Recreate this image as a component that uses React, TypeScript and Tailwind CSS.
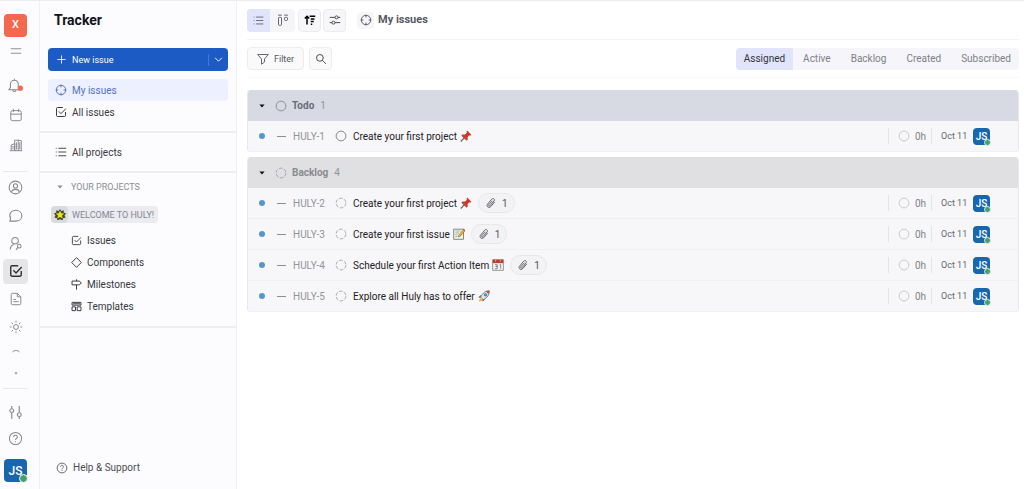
import React from "react";

type IconProps = { className?: string; children?: React.ReactNode; width?: number };

const Icon = ({ className = "size-3", children, width = 1.2 }: IconProps) => (
    <svg viewBox="0 0 16 16" className={`shrink-0 ${className}`} fill="none" stroke="currentColor" strokeWidth={width} aria-hidden="true">
        {children}
    </svg>
);

const BellIcon = () => (
    <Icon className="size-[15px]" width={1.1}>
        <path d="M1 12.5h11.500L11 10V6.500a4.200 4.200 0 0 0-8.400 0V10zM5 12.500c0 2.600 3.600 2.600 3.600 0M6.800 2.300V.8" />
        <circle cx="13.2" cy="10.8" r="2.800" fill="#ee6a50" stroke="none" />
    </Icon>
);

const CalendarIcon = () => (
    <Icon className="size-[14px]" width={1.1}>
        <rect x="2" y="3" width="12" height="11.5" rx="2" />
        <path d="M2 7h12M5 1v3.5M11 1v3.5" />
    </Icon>
);

const BuildingIcon = () => (
    <Icon className="size-[14px]" width={1.1}>
        <path d="M1 14.500h14M2.500 14.500V8l4-1.500v8M6.500 14.500V2.500h4v12M10.500 2.500l3.500.5v11.500M4.500 9v4M8.500 5v8M12.300 5v8" />
    </Icon>
);

const UserIcon = () => (
    <Icon className="size-[15px]" width={1.1}>
        <circle cx="8" cy="8" r="6.800" />
        <circle cx="8" cy="6.300" r="2.200" />
        <path d="M3.800 13c.4-2.200 1.800-3 4.200-3s3.800.8 4.200 3" />
    </Icon>
);

const ChatIcon = () => (
    <Icon className="size-[15px]" width={1.1}>
        <path d="M2 14l.8-3.200C.2 6.500 3.500 2.500 8 2.500c4 0 6.800 2.400 6.800 5.700S12 14 8 14z" />
    </Icon>
);

const ContactIcon = () => (
    <Icon className="size-[15px]" width={1.1}>
        <circle cx="7.500" cy="5" r="3.500" />
        <path d="M2.500 14.500c0-3 1.200-4.800 3.500-5.200" />
        <circle cx="12" cy="10.800" r="1.900" />
        <path d="M10.600 12.200L8.500 14.800" />
    </Icon>
);

const CheckIcon = ({ className = "size-3", width = 1.3 }: IconProps) => (
    <Icon className={className} width={width}>
        <path d="M10.500 2H3.500A1.500 1.500 0 0 0 2 3.500v9A1.500 1.500 0 0 0 3.500 14h9a1.500 1.500 0 0 0 1.500-1.500V8M5 7.200l3 3L14.500 3.500" />
    </Icon>
);

const DocIcon = () => (
    <Icon className="size-[14px]" width={1.1}>
        <path d="M9.500 1.500H4A1.500 1.500 0 0 0 2.500 3v10A1.500 1.500 0 0 0 4 14.500h8a1.500 1.500 0 0 0 1.500-1.500V5.500zM9.500 1.500v4h4M5 8.500h3M5 11h6" />
    </Icon>
);

const SunIcon = () => (
    <Icon className="size-[14px]" width={1.1}>
        <circle cx="8" cy="8" r="2.800" />
        <path d="M8 1v2M8 13v2M1 8h2M13 8h2M3 3l1.500 1.500M11.500 11.500L13 13M13 3l-1.500 1.500M4.500 11.500L3 13" />
    </Icon>
);

const SettingsIcon = () => (
    <Icon className="size-[15px]" width={1.2}>
        <path d="M4 1v3M4 8v7M12 1v7M12 12.500V15" />
        <circle cx="4" cy="6" r="2" />
        <circle cx="12" cy="10.300" r="2" />
    </Icon>
);

const HelpIcon = ({ className = "size-[15px]" }: IconProps) => (
    <Icon className={className} width={1.1}>
        <circle cx="8" cy="8" r="6.500" />
        <path d="M6 6.500c0-2.700 4-2.700 4 0 0 1.400-2 1.500-2 3.200M8 10.800v1.200" />
    </Icon>
);

const TargetIcon = ({ className = "size-3" }: IconProps) => (
    <Icon className={className} width={1.3}>
        <circle cx="8" cy="8" r="6.300" />
        <path d="M8 1v3.500M8 11.500V15M1 8h3.500M11.500 8H15" />
    </Icon>
);

const ListIcon = ({ className = "size-3" }: IconProps) => (
    <Icon className={className}>
        <path d="M4.500 3H15M4.500 8H15M4.500 13H15M1 3h1.200M1 8h1.200M1 13h1.200" />
    </Icon>
);

const ClipIcon = () => (
    <Icon className="size-3" width={1.2}>
        <path d="M13 6.500L7.800 12.700c-2.600 3-6.800-.3-4.300-3.300L9 2.800c1.800-2 4.800.3 3 2.500l-5.300 6.300c-1 1.200-2.600-.1-1.700-1.200L9.800 5" />
    </Icon>
);

const Ring = ({ dashed = false, className = "size-3" }: { dashed?: boolean; className?: string }) => (
    <Icon className={className}>
        <circle cx="8" cy="8" r="6.500" strokeDasharray={dashed ? "4.800 2" : undefined} />
    </Icon>
);

const Caret = ({ className = "" }: IconProps) => (
    <svg viewBox="0 0 8 5" className={`shrink-0 ${className}`} fill="currentColor" aria-hidden="true">
        <path d="M.5.5h7L4 4.500z" />
    </svg>
);

const Pin = () => (
    <svg viewBox="0 0 16 16" className="size-3 shrink-0" role="img" aria-label="pushpin">
        <path d="M6.500 9.500L1 15.300" stroke="#60656b" strokeWidth="1.600" />
        <path d="M9.700.8l5.500 5.500-1.500 1.200-1.400-.4-2.100 2.200.2 3.700-1.500.8-6.700-6.500.9-1.400 3.700.1L9.200 3.800l-.5-1.700z" fill="#d5412b" />
        <path d="M2.300 7.300l6.600 6.500M7 6l3.200 3.200M9.200 3.800l3.100 3.300" stroke="#8d2116" strokeWidth=".9" />
    </svg>
);

const Memo = () => (
    <svg viewBox="0 0 16 16" className="size-3 shrink-0" role="img" aria-label="memo">
        <rect x="1" y="1.500" width="13" height="13.500" fill="#f4f1df" stroke="#5b6c70" />
        <path d="M3 4h7M3 6.500h5M3 9h3M3 11.500h3" stroke="#82a6ad" />
        <path d="M7 12l1-3L14 2l2 1.700-6 7z" fill="#f1b52e" stroke="#62502c" strokeWidth=".6" />
        <path d="M13.200 2.800L14.500 1 16 2.500v1.700z" fill="#d84b3d" />
    </svg>
);

const CalendarEmoji = () => (
    <svg viewBox="0 0 16 16" className="size-3 shrink-0" role="img" aria-label="calendar">
        <rect x="1" y="1" width="14" height="14" fill="#f4f4f4" stroke="#777" />
        <path d="M1 1h14v4.500H1z" fill="#c53a2b" />
        <path d="M4 2.500h1.500M10.500 2.500H12" stroke="#fff" />
        <path d="M4 7.500h3v2.500H5h2v3H4M10 8l1.500-.8V13" fill="none" stroke="#686868" />
    </svg>
);

const Rocket = () => (
    <svg viewBox="0 0 16 16" className="size-3 shrink-0" role="img" aria-label="rocket">
        <path d="M4 7L1 9.500l2.500.5M9 12l-2.500 3-.5-2.500" fill="#ce4334" stroke="#8c3028" strokeWidth=".6" />
        <path d="M3 11l3 2.500L1 15.500z" fill="#f3a333" />
        <path d="M15 1c-5 0-8.500 2.500-11.500 8.500l3.500 3.500C13 10 15.300 6 15 1z" fill="#dfe9ed" stroke="#365567" strokeWidth=".9" />
        <path d="M15 1l-4.500.7 3.500 4z" fill="#cf4436" />
        <circle cx="10" cy="6.500" r="1.700" fill="#46a4d4" stroke="#28556d" strokeWidth=".7" />
    </svg>
);

const Star = () => (
    <svg viewBox="0 0 16 16" className="size-3" aria-hidden="true">
        <path d="M8 0l1.800 2.500L13 1.500v3.300l3 1.200-2 2.500 1.500 3-3.200.4L11.500 15 8 13.500 4.500 15l-.8-3.100-3.200-.4 1.500-3L0 6l3-1.200V1.500l3.200 1z" fill="#3f4b30" />
        <path d="M8 2l1.700 3.700 4 .4-3 2.700.9 4L8 10.800l-3.600 2 .9-4-3-2.700 4-.4z" fill="#f3dd22" />
    </svg>
);

const Avatar = ({ big = false }) => (
    <span className={big
        ? "relative flex size-[23px] shrink-0 items-center justify-center rounded bg-[#1866ae] text-xs font-medium text-white"
        : "relative flex size-[17px] shrink-0 items-center justify-center rounded bg-[#1866ae] text-[10px] font-medium text-white"}>
        JS
        <span className={big
            ? "absolute -bottom-px -right-px size-[9px] rounded-full border border-white bg-[#47a06b]"
            : "absolute -bottom-px -right-px size-[7px] rounded-full border border-[#d9efe2] bg-[#47a06b]"} />
    </span>
);

const RailButton = ({ label, active = false, children }: { label: string; active?: boolean; children: React.ReactNode }) => (
    <button aria-label={label} className={`flex h-7 w-[25px] shrink-0 items-center justify-center ${active ? "text-[#303236]" : ""}`}>
        {active ? <span className="flex size-[25px] shrink-0 items-center justify-center rounded bg-[#e6e6e8]">{children}</span> : children}
    </button>
);

const Rail = () => (
    <nav aria-label="Applications" className="flex w-10 shrink-0 flex-col items-center border-r border-[#f0f0f3] pb-[7px] pr-2 pt-[13px] text-[#85878c]">
        <button aria-label="Workspace" className="flex size-[23px] shrink-0 items-center justify-center rounded bg-[#f4694d] text-[11px] font-medium text-white">X</button>
        <RailButton label="Menu"><Icon className="size-3" width={1.2}><path d="M1 5h14M1 11h14" /></Icon></RailButton>
        <div className="mt-[6px] flex flex-col gap-[2px]">
            <RailButton label="Notifications"><BellIcon /></RailButton>
            <RailButton label="Planner"><CalendarIcon /></RailButton>
            <RailButton label="Office"><BuildingIcon /></RailButton>
        </div>
        <hr className="mb-px mt-3 w-[25px] border-[#e8e8eb]" />
        <RailButton label="Profile"><UserIcon /></RailButton>
        <RailButton label="Chat"><ChatIcon /></RailButton>
        <RailButton label="Contacts"><ContactIcon /></RailButton>
        <RailButton label="Tracker" active><CheckIcon className="size-[14px]" width={1.6} /></RailButton>
        <RailButton label="Documents"><DocIcon /></RailButton>
        <RailButton label="Processes"><SunIcon /></RailButton>
        <button aria-label="Scroll up" className="flex h-5 w-6 items-center justify-center"><Icon className="size-2" width={2}><path d="M1 10c4-4 10-4 14 0" /></Icon></button>
        <button aria-label="Scroll down" className="flex h-6 w-6 items-center justify-center"><Caret className="h-[3px] w-1" /></button>
        <hr className="mt-[3px] w-[25px] border-[#e8e8eb]" />
        <div className="mt-auto flex flex-col items-center -space-y-0.5">
            <RailButton label="Settings"><SettingsIcon /></RailButton>
            <RailButton label="Help"><HelpIcon /></RailButton>
        </div>
        <button aria-label="Account" className="mt-[7px]"><Avatar big /></button>
    </nav>
);

const NavLink = ({ icon, label, active = false }: { icon: React.ReactNode; label: string; active?: boolean }) => (
    <a href="#" className={`flex h-[22px] items-center gap-[5px] rounded px-[7px] ${active ? "bg-[#edf0fe] text-[#5471bd]" : "text-[#36383d]"}`}>
        {icon}{label}
    </a>
);

const Sidebar = () => (
    <aside className="flex w-[197px] shrink-0 flex-col border-r border-[#f0f0f3] text-[10px] text-[#36383d]">
        <h1 className="px-[14px] pt-[9px] text-sm font-bold leading-5 text-[#111318]">Tracker</h1>
        <div className="mx-2 mt-[18px] flex h-[23px] shrink-0 items-center rounded bg-[#1c5bc4] text-[9px] leading-4 text-white">
            <button className="flex h-full flex-1 items-center gap-[5px] pl-2"><Icon className="size-[11px]"><path d="M8 2v12M2 8h12" /></Icon>New issue</button>
            <button aria-label="More options" className="flex h-3 w-5 items-center justify-center border-l border-[#4678cf]"><Icon className="size-[9px]" width={1.700}><path d="M2 5l6 6 6-6" /></Icon></button>
        </div>
        <nav aria-label="Issues" className="mx-2 mb-2 mt-2">
            <NavLink icon={<TargetIcon />} label="My issues" active />
            <NavLink icon={<CheckIcon />} label="All issues" />
        </nav>
        <div className="border-y-2 border-[#eeeef1] px-2 py-2">
            <NavLink icon={<ListIcon />} label="All projects" />
        </div>
        <div className="border-b-2 border-[#eeeef1] pb-[9px]">
            <button className="flex h-7 items-center gap-2 pl-[17px] text-[9px] leading-4 text-[#8b8d93]"><Caret className="h-1 w-[6px]" />YOUR PROJECTS</button>
            <button className="ml-[11px] mt-[5px] flex h-[17px] items-center gap-1 rounded-sm bg-[#ebecf2] pr-1 text-[9px] leading-4 text-[#85878e]">
                <span className="flex size-[17px] items-center justify-center rounded-sm bg-[#dadbde]"><Star /></span>WELCOME TO HULY!
            </button>
            <nav aria-label="Project" className="mt-[6px] flex flex-col">
                {[
                    { label: "Issues", icon: <CheckIcon className="size-[11px]" /> },
                    { label: "Components", icon: <Icon className="size-[11px]" width={1.4}><path d="M8 1l7 7-7 7-7-7z" /></Icon> },
                    { label: "Milestones", icon: <Icon className="size-[11px]" width={1.4}><path d="M1.500 3h10.500L15 5.700 12 8.500H1.500zM8 .5V3M8 8.500v7" /></Icon> },
                    { label: "Templates", icon: <Icon className="size-[11px]" width={1.4}><path d="M1.500 2h13v4h-13zM1.500 8.500h5v5.500h-5zM9 8.500h5.500v5.500H9zM3 4h10" /></Icon> },
                ].map((item) => (
                    <a key={item.label} href="#" className="flex h-[22px] items-center gap-[5px] pl-[31px]">{item.icon}{item.label}</a>
                ))}
            </nav>
        </div>
        <a href="#" className="mb-[13px] mt-auto flex items-center gap-[5px] pl-4 text-[10px] leading-4 text-[#4c4e53]"><HelpIcon className="size-3" />Help &amp; Support</a>
    </aside>
);

type Issue = { id: string; title: string; emoji: React.ReactNode; files?: number };

const groups: { name: string; dashed: boolean; issues: Issue[] }[] = [
    { name: "Todo", dashed: false, issues: [{ id: "HULY-1", title: "Create your first project", emoji: <Pin /> }] },
    {
        name: "Backlog",
        dashed: true,
        issues: [
            { id: "HULY-2", title: "Create your first project", emoji: <Pin />, files: 1 },
            { id: "HULY-3", title: "Create your first issue", emoji: <Memo />, files: 1 },
            { id: "HULY-4", title: "Schedule your first Action Item", emoji: <CalendarEmoji />, files: 1 },
            { id: "HULY-5", title: "Explore all Huly has to offer", emoji: <Rocket /> },
        ],
    },
];

const IssueRow = ({ issue, dashed }: { issue: Issue; dashed: boolean }) => (
    <li className="flex h-[31px] items-center border-b border-[#f0f0f3] pl-[11px] pr-7 text-[10px]">
        <span className="size-[6px] shrink-0 rounded-full bg-[#5796cd]" />
        <span className="ml-3 h-px w-[9px] shrink-0 bg-[#8d8e91]" />
        <span className="ml-[7px] w-[42px] shrink-0 text-[10px] text-[#919397]">{issue.id}</span>
        <span className={dashed ? "text-[#a2a3a6]" : "text-[#77797f]"}><Ring dashed={dashed} /></span>
        <a href="#" className="ml-[6px] flex items-center gap-[3px] whitespace-nowrap text-[#1f2126]">{issue.title} {issue.emoji}</a>
        {issue.files && (
            <button className="ml-[6px] flex h-5 items-center gap-[5px] rounded-full border border-[#e7e7ea] bg-[#f3f3f5] px-[6px] text-[10px] text-[#54565b]"><ClipIcon />{issue.files}</button>
        )}
        <div className="ml-auto flex shrink-0 items-center text-[10px] text-[#818388]">
            <span className="flex h-4 w-11 items-center gap-[5px] border-x border-[#e4e4e7] pl-[9px]"><span className="text-[#c4c5c9]"><Ring /></span><span>0h</span></span>
            <span className="ml-[9px] w-8 whitespace-nowrap text-[9px] leading-4 text-[#66686d]">Oct 11</span>
            <Avatar />
        </div>
    </li>
);

const tabs = ["Assigned", "Active", "Backlog", "Created", "Subscribed"];

const Main = () => (
    <main className="min-w-0 flex-1 bg-white pr-[5px]">
        <header className="ml-[10px] flex h-[39px] items-center border-b border-[#f3f3f5]">
            <div className="flex rounded bg-[#f5f5f8] text-[#56585f]">
                <button aria-label="List view" className="flex h-[23px] w-[23px] items-center justify-center rounded-l bg-[#e1e4fa]"><ListIcon className="size-[11px]" /></button>
                <button aria-label="Board view" className="flex h-[23px] w-[25px] items-center justify-center"><Icon className="size-3"><path d="M1.500 1.500h5M9.500 1.500h5" /><rect x="2" y="4.500" width="4" height="10.500" rx="1" /><rect x="10" y="4.500" width="4" height="4" rx="1" /></Icon></button>
            </div>
            <button aria-label="Sort" className="ml-[3px] flex size-[23px] items-center justify-center rounded border border-[#ececef] bg-[#f7f7f9] text-black"><Icon className="size-3" width={2}><path d="M4 14V3M1 6l3-3 3 3M7.500 3H15M9 6.500h5M9 10h4M9 13.500h2" /></Icon></button>
            <button aria-label="View options" className="ml-[2px] flex size-[23px] items-center justify-center rounded border border-[#ececef] bg-[#f7f7f9] text-[#45474d]"><Icon className="size-3" width={1.300}><path d="M1 4.500h7M12 4.500h3M1 11.500h3M8 11.500h7" /><circle cx="10" cy="4.500" r="2" /><circle cx="6" cy="11.500" r="2" /></Icon></button>
            <span className="ml-[11px] flex size-[17px] items-center justify-center rounded-sm bg-[#f6f6f9] text-[#5b5e66]"><TargetIcon /></span>
            <h2 className="ml-1 text-[11px] font-bold leading-4 text-[#555963]">My issues</h2>
        </header>
        <div className="ml-[10px] flex h-[38px] items-center border-b border-[#f9f9fa]">
            <button className="flex h-[23px] items-center gap-[5px] rounded border border-[#ececef] bg-[#fafafb] px-[9px] text-[9px] leading-4 text-[#55585f]"><Icon className="size-3"><path d="M1 2h14l-5 6v4l-4 3V8z" /></Icon>Filter</button>
            <button aria-label="Search" className="ml-[5px] flex size-[23px] items-center justify-center rounded border border-[#ececef] bg-[#fafafb] text-[#393b40]"><Icon className="size-3"><circle cx="6.500" cy="6.500" r="4.500" /><path d="M10 10l4.500 4.500" /></Icon></button>
            <div role="tablist" className="ml-auto flex h-[22px] items-center rounded bg-[#f6f6fa] text-[10px] text-[#7d8088]">
                {tabs.map((tab, i) => (
                    <button key={tab} role="tab" aria-selected={i === 0} className={i === 0 ? "h-full rounded-l bg-[#e1e4fa] px-2 text-[#32353e]" : "h-full px-[10px] last:pr-2"}>{tab}</button>
                ))}
            </div>
        </div>
        <div className="ml-[10px] mt-3 flex flex-col gap-[5px]">
            {groups.map((group) => (
                <section key={group.name} className="overflow-hidden rounded-sm border-x border-[#e8e8eb] bg-[#f7f7f9]">
                    <h3 className={`flex h-[31px] items-center pl-[11px] text-[11px] ${group.dashed ? "bg-[#e0e0e2] text-[#8a8b8f]" : "bg-[#d7dae3] text-[#686c77]"}`}>
                        <button aria-label={`Collapse ${group.name}`} className="text-[#111216]"><Caret className="h-1 w-[6px]" /></button>
                        <span className="ml-[10px] opacity-75"><Ring dashed={group.dashed} /></span>
                        <span className="ml-[5px] text-[10px] font-bold">{group.name}</span>
                        <span className="ml-[6px] text-[10px] text-[#92949a]">{group.issues.length}</span>
                    </h3>
                    <ul>{group.issues.map((issue) => <IssueRow key={issue.id} issue={issue} dashed={group.dashed} />)}</ul>
                </section>
            ))}
        </div>
    </main>
);

const App = () => {
    return (
        <div className="flex min-h-screen border-t border-[#ededf0] bg-[#fcfcfe] font-[Roboto,sans-serif]">
            <Rail />
            <Sidebar />
            <Main />
        </div>
    );
}

export default App;
